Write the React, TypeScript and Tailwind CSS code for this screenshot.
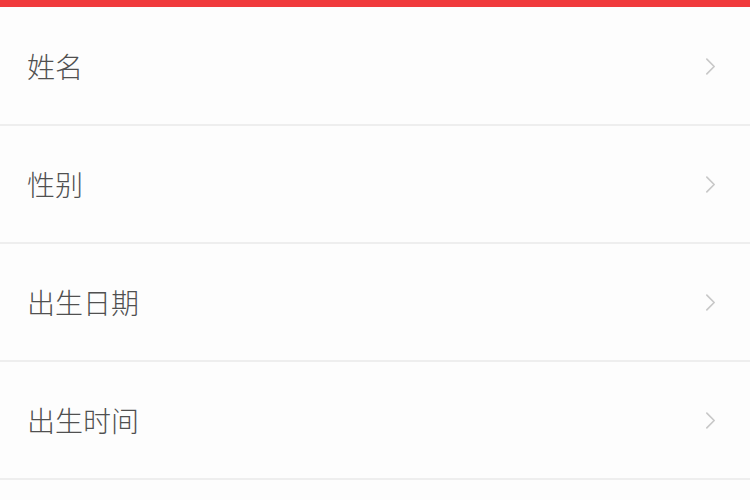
const rows = ["姓名", "性别", "出生日期", "出生时间"];

function Chevron() {
  return (
    <svg viewBox="0 0 12 20" className="h-[19px] w-[11px]" fill="none">
      <path d="M2 2l8 8-8 8" stroke="#c8c8c8" strokeWidth="1.8" strokeLinecap="round" strokeLinejoin="round" />
    </svg>
  );
}

export default function App() {
  return (
    <main
      className="h-[500px] w-[750px] overflow-hidden bg-[#fdfdfd]"
      style={{ fontFamily: '"Noto Sans CJK SC", "Noto Sans", sans-serif' }}
    >
      <div className="h-[7px] bg-[#f03a3c]" />
      <div className="h-[1px]" />
      {rows.map((label) => (
        <div
          key={label}
          className="flex h-[118px] items-center justify-between border-b-2 border-[#eeeeee] pl-[27px] pr-[34px]"
        >
          <span className="text-[28px] font-light leading-none text-[#505050]">{label}</span>
          <Chevron />
        </div>
      ))}
    </main>
  );
}
